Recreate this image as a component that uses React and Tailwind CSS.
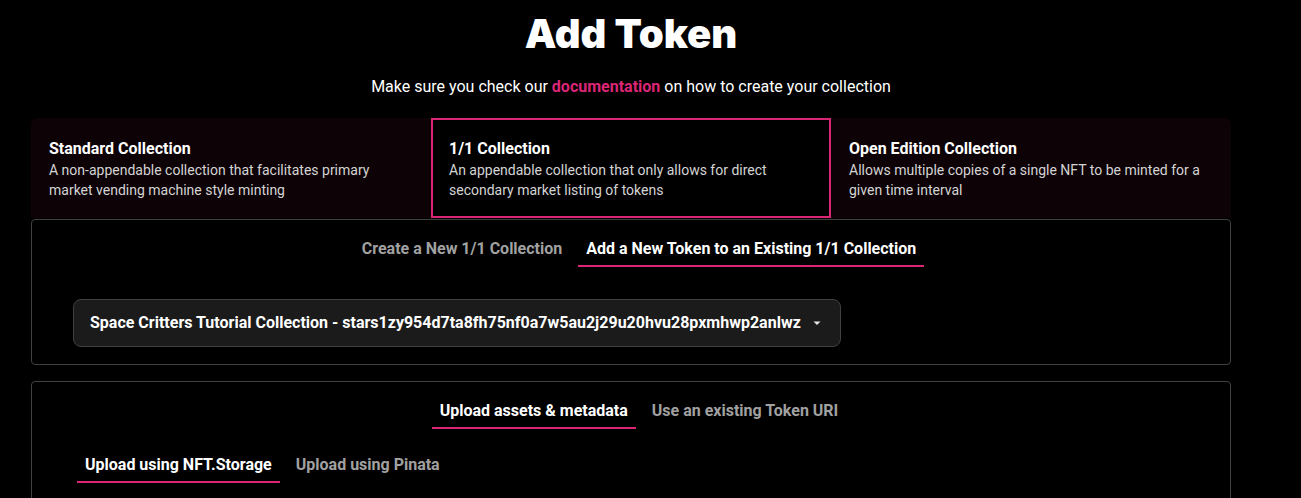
import { useState } from 'react';

const collectionTypes = [
  {
    id: 'standard',
    title: 'Standard Collection',
    description: 'A non-appendable collection that facilitates primary market vending machine style minting',
  },
  {
    id: 'one-of-one',
    title: '1/1 Collection',
    description: 'An appendable collection that only allows for direct secondary market listing of tokens',
  },
  {
    id: 'open-edition',
    title: 'Open Edition Collection',
    description: 'Allows multiple copies of a single NFT to be minted for a given time interval',
  },
];

const Tab = ({ active, onClick, children }) => (
  <button
    type="button"
    onClick={onClick}
    className={`px-2 pt-2 pb-1 border-b-2 text-base font-bold leading-6 ${
      active ? 'border-[#DB2676] text-white' : 'border-transparent text-neutral-400'
    }`}
  >
    {children}
  </button>
);

const App = () => {
  const [type, setType] = useState('one-of-one');
  const [mode, setMode] = useState('existing');
  const [upload, setUpload] = useState('assets');
  const [service, setService] = useState('nft-storage');

  return (
    <div className="min-h-screen bg-black text-white font-['Roboto',sans-serif]">
      <div className="ml-[31px] w-[1200px] pt-[12px]">
        {/* Header */}
        <h1 className="text-center text-[40px] leading-[44px] font-black font-['Inter',sans-serif]">
          Add Token
        </h1>
        <p className="mt-[19px] text-center text-base leading-6">
          Make sure you check our{' '}
          <a href="#" className="font-bold text-[#DB2676]">documentation</a>{' '}
          on how to create your collection
        </p>

        {/* Collection types */}
        <div className="mt-[19px] grid grid-cols-3">
          {collectionTypes.map((item, i) => (
            <button
              key={item.id}
              type="button"
              onClick={() => setType(item.id)}
              className={`h-[100px] p-4 border-2 text-left ${
                type === item.id
                  ? 'border-[#DB2676] bg-black'
                  : 'border-transparent bg-[#0d0205]'
              } ${i === 0 ? 'rounded-tl-md' : ''} ${i === 2 ? 'rounded-tr-md' : ''}`}
            >
              <div className="text-base font-bold leading-6 text-white">{item.title}</div>
              <div className="-mt-px text-sm leading-5 text-[#d4d4d4]">{item.description}</div>
            </button>
          ))}
        </div>

        {/* Mode panel */}
        <div className="mt-px rounded border border-neutral-700 px-[41px] pt-[9px] pb-[17px]">
          <div className="flex justify-center gap-2 pl-4">
            <Tab active={mode === 'new'} onClick={() => setMode('new')}>Create a New 1/1 Collection</Tab>
            <Tab active={mode === 'existing'} onClick={() => setMode('existing')}>
              Add a New Token to an Existing 1/1 Collection
            </Tab>
          </div>
          <div className="mt-[32px]">
            <button
              type="button"
              className="flex h-12 w-[768px] items-center justify-between rounded-lg border border-neutral-700 bg-[#1b1b1b] px-4 text-base font-bold"
            >
              <span>Space Critters Tutorial Collection - stars1zy954d7ta8fh75nf0a7w5au2j29u20hvu28pxmhwp2anlwz</span>
              <svg width="10" height="6" viewBox="0 0 10 6" className="mr-[2px] fill-gray-200">
                <path d="M1.5 1.5h7L5 5z" />
              </svg>
            </button>
          </div>
        </div>

        {/* Upload panel */}
        <div className="mt-4 h-[200px] rounded border border-neutral-700 pt-[9px]">
          <div className="flex justify-center gap-2 pl-4">
            <Tab active={upload === 'assets'} onClick={() => setUpload('assets')}>Upload assets &amp; metadata</Tab>
            <Tab active={upload === 'uri'} onClick={() => setUpload('uri')}>Use an existing Token URI</Tab>
          </div>
          <div className="mt-4 flex gap-2 pl-[45px]">
            <Tab active={service === 'nft-storage'} onClick={() => setService('nft-storage')}>Upload using NFT.Storage</Tab>
            <Tab active={service === 'pinata'} onClick={() => setService('pinata')}>Upload using Pinata</Tab>
          </div>
        </div>
      </div>
    </div>
  );
};

export default App;
